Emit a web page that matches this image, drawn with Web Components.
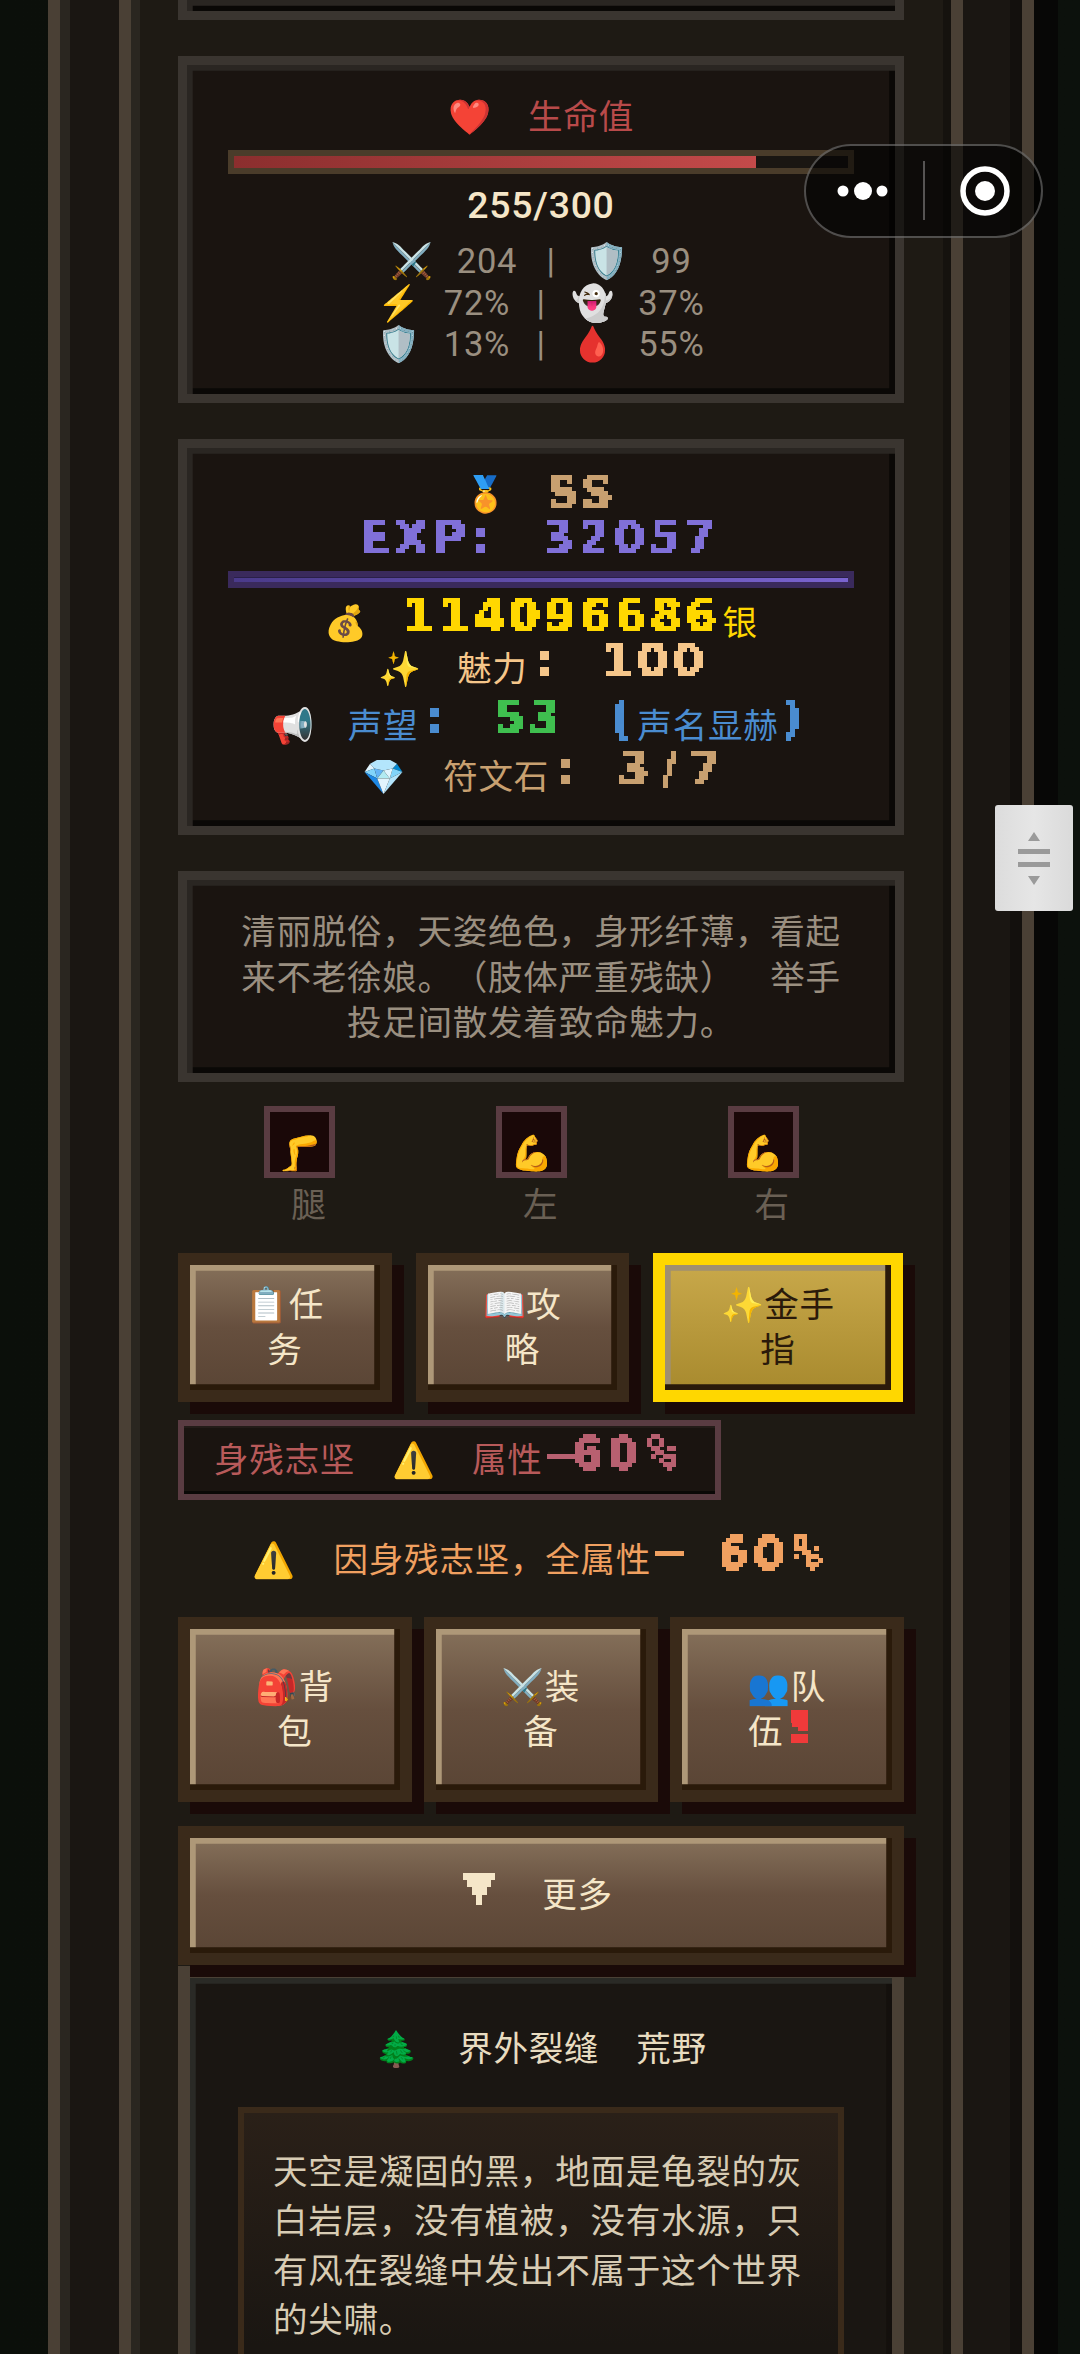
<!DOCTYPE html>
<html lang="zh-CN"><head><meta charset="utf-8"><title>status</title>
<style>
html,body{margin:0;padding:0;background:#0b0f0a}
body{font:34.56px/1.3 Roboto,"Noto Sans CJK SC","Noto Sans",sans-serif;color:#f5e6c8;letter-spacing:.72px;text-spacing-trim:space-all}
.e{font-family:"Noto Color Emoji","Noto Sans CJK SC",sans-serif;letter-spacing:0;line-height:0}
.e.tall{line-height:38px}
.r{display:flex;align-items:center;justify-content:center;white-space:nowrap;height:46px}
.t{text-align:center;white-space:nowrap}
.stats{color:#9a8f80;line-height:41.5px;word-spacing:14px;margin-top:14px}
.stats i{font-style:normal;margin:0 3px}
.stats i.w{margin:0 6px}
.gap36{height:36px}
.desc{color:#9a8f80;line-height:45.6px;text-align:center;white-space:nowrap;padding-top:30px}
.m{font:bold 48px/34px "DejaVu Sans Mono",monospace;letter-spacing:0;margin-left:4px}
.slots{display:grid;grid-template-columns:repeat(3,231.7px);padding-left:6px;margin-top:24px}
.btns3{display:grid;grid-template-columns:214px 213px 250px;gap:24px;margin-top:24px;position:relative}
.btns2{display:grid;grid-template-columns:repeat(3,234px);gap:12px}
.warn{height:60px;margin:30px 0 27px;color:#f0a060;padding-right:6px}
.more{margin-top:24px;position:relative;z-index:2;padding-right:6px}
</style>
</head><body>
<template id="px-tpl"><style>
:host{display:inline-block;font:bold 44px/34px "DejaVu Sans",sans-serif;letter-spacing:4.7px;word-spacing:0;margin-right:-4.7px}
span{display:block;filter:url(#px);padding:9px 2px 1px 0;white-space:pre}
svg{position:absolute;width:0;height:0}
</style><svg aria-hidden="true"><filter id="px" x="0" y="0" width="100%" height="100%" color-interpolation-filters="sRGB"><feComponentTransfer in="SourceGraphic" result="s"><feFuncA type="discrete" tableValues="0 1"/></feComponentTransfer><feFlood x="2" y="2" width="1" height="1"/><feComposite width="4" height="4"/><feTile result="a"/><feComposite in="s" in2="a" operator="in"/><feMorphology operator="dilate" radius="2"/></filter></svg><span><slot></slot></span></template>

<game-page>
  <stone-card stub></stone-card>
  <div class="gap36"></div>
  <stone-card style="height:347px">
    <div class="r" style="height:46px;margin-top:29px;color:#b84a4a"><span class="e" style="margin-right:37px">❤️</span>生命值</div>
    <stat-bar kind="hp" value="85"></stat-bar>
    <div class="t" style="font-size:37.44px;font-weight:500;line-height:44px;margin-top:9px">255/300</div>
    <div class="t stats"><span class="e">⚔️</span> 204 <i class="w">|</i> <span class="e">🛡️</span> 99<br><span class="e">⚡</span> 72% <i>|</i> <span class="e">👻</span> 37%<br><span class="e">🛡️</span> 13% <i>|</i> <span class="e">🩸</span> 55%</div>
  </stone-card>
  <div class="gap36"></div>
  <stone-card style="height:396px">
    <div class="r" style="margin-top:23px;padding-right:3px"><span class="e" style="margin-right:40px">🏅</span><px-t style="color:#c8a070;margin-bottom:10px">SS</px-t></div>
    <div class="r" style="height:34px;color:#8070d8;padding-right:5px"><px-t>EXP:</px-t><px-t style="margin-left:53px">32057</px-t></div>
    <stat-bar kind="exp" value="100"></stat-bar>
    <div class="r" style="margin-top:12px;color:#ffd700"><span class="e" style="margin-right:36px">💰</span><px-t style="margin-bottom:22px">114096686</px-t><span style="margin-left:4px">银</span></div>
    <div class="r" style="padding-left:6px;color:#f5c68a"><span class="e" style="margin-right:36px">✨</span>魅力<px-t style="margin-bottom:24px;margin-left:8px">:</px-t><px-t style="margin:0 0 24px 47px">100</px-t></div>
    <div class="r" style="padding-right:1px;margin-top:11px;color:#4a8cd0"><span class="e" style="margin-right:33px">📢</span>声望<px-t style="margin-bottom:24px;margin-left:8px">:</px-t><px-t style="margin:0 0 24px 48px;color:#3fbf4f">53</px-t><px-t style="margin:0 0 24px 44px">(</px-t>声名显赫<px-t style="margin:0 0 24px 4px">)</px-t></div>
    <div class="r" style="padding-left:2px;margin-top:5px;color:#c8a070"><span class="e" style="margin-right:38px">💎</span>符文石<px-t style="margin-bottom:24px;margin-left:8px">:</px-t><px-t style="margin:0 -12px 24px 42px;letter-spacing:12px">3/7</px-t></div>
  </stone-card>
  <div class="gap36"></div>
  <stone-card style="height:211px">
    <div class="desc">清丽脱俗&#xFF0C;天姿绝色&#xFF0C;身形纤薄&#xFF0C;看起<br>来不老徐娘。&#xFF08;肢体严重残缺&#xFF09;&#x3000;举手<br>投足间散发着致命魅力。</div>
  </stone-card>
  <div class="slots">
    <body-slot label="腿"><span class="e tall">🦵</span></body-slot>
    <body-slot label="左"><span class="e tall">💪</span></body-slot>
    <body-slot label="右"><span class="e tall">💪</span></body-slot>
  </div>
  <div class="btns3">
    <wood-button h="149"><span class="e">📋</span>任<br>务</wood-button>
    <wood-button h="149"><span class="e">📖</span>攻<br>略</wood-button>
    <wood-button h="149" gold><span class="e">✨</span>金手<br>指</wood-button>
  </div>
  <debuff-tag><span>身残志坚</span><span class="e" style="margin:0 37px 0 37px">⚠️</span><span>属性</span><px-t style="margin-bottom:22px;color:#b86070"><span style="letter-spacing:-7px">−</span>60<span class="m">%</span></px-t></debuff-tag>
  <div class="r warn"><span class="e" style="margin-right:38px">⚠️</span>因身残志坚&#xFF0C;全属性<px-t style="margin-bottom:22px">−</px-t><px-t style="margin:0 0 22px 28px">60<span class="m">%</span></px-t></div>
  <div class="btns2">
    <wood-button h="185"><span class="e">🎒</span>背<br>包</wood-button>
    <wood-button h="185"><span class="e">⚔️</span>装<br>备</wood-button>
    <wood-button h="185"><span class="e">👥</span>队<br>伍<px-t style="color:#f03a3a;vertical-align:1px;margin:-30px 4px -10px 12px;transform:scaleX(1.8)">!</px-t></wood-button>
  </div>
  <wood-button h="139" class="more"><svg width="32" height="32" viewBox="0 0 32 32" style="vertical-align:2px;margin-right:47px" fill="#f5e6c8"><path d="M0 0h32v7h-4v7h-4v8h-5v10h-6V22H9v-8H4V7H0z"/></svg>更多</wood-button>
  <region-panel>
    <div class="r" style="color:#e8dcc0;height:46px;margin-top:48px"><span class="e" style="margin-right:40px">🌲</span>界外裂缝<span style="margin-left:37px">荒野</span></div>
    <lore-box>天空是凝固的黑&#xFF0C;地面是龟裂的灰<br>白岩层&#xFF0C;没有植被&#xFF0C;没有水源&#xFF0C;只<br>有风在裂缝中发出不属于这个世界<br>的尖啸。</lore-box>
  </region-panel>
  <wx-capsule></wx-capsule>
  <scroll-handle></scroll-handle>
</game-page>

<script>
const def=(n,html,init)=>customElements.define(n,class extends HTMLElement{
  constructor(){super();const s=this.attachShadow({mode:'open'});s.innerHTML=html;}
  connectedCallback(){init&&init.call(this,this.shadowRoot);}
});
customElements.define('px-t',class extends HTMLElement{constructor(){super();this.attachShadow({mode:'open'}).appendChild(document.getElementById('px-tpl').content.cloneNode(true));}});
def('game-page',`<style>
:host{display:block;position:relative;width:1080px;height:2354px;overflow:hidden;box-sizing:border-box;padding-left:48px;background:linear-gradient(90deg,#0b0f0a,#0c110c)}
.outer{box-sizing:border-box;width:986px;height:2354px;border:solid #4a4035;border-width:0 12px;background:#1a1612;padding-left:59px;box-shadow:inset 10px 0 0 #2a2620,inset -12px 0 0 #13100d,24px 0 0 #070706}
.inner{box-sizing:border-box;width:844px;height:2354px;border:solid #4a4035;border-width:0 12px;background:#1e1a14;padding-left:47px;box-shadow:inset 9px 0 0 #2a2620,inset -8px 0 0 #15120e}
.col{width:726px}
</style><div class="outer"><div class="inner"><div class="col"><slot></slot></div></div></div>`);
def('stone-card',`<style>
:host{display:block;box-sizing:border-box;border:9px solid #3a3530;background:#1a1410;box-shadow:inset 5.76px 5.76px 0 #2a2622,inset -5.76px -5.76px 0 #0a0806;text-align:center}
:host([stub]){height:20px;border-top:0}
</style><slot></slot>`);
def('stat-bar',`<style>
:host{display:block;box-sizing:border-box;height:24px;margin:10px 41px 0;border:6px solid #4a3c2a;background:#1a1612;position:relative}
:host([kind=exp]){height:17px;margin-top:20px;border-color:#3a2a5c;background:#2a2048}
i{display:block;height:100%;background:linear-gradient(90deg,#8b2e2e,#c44a4a)}
:host([kind=exp]) i{height:4px;margin-top:.5px;background:linear-gradient(90deg,#4a3a8a,#7a64d0)}
</style><i></i>`,function(s){s.querySelector('i').style.width=this.getAttribute('value')+'%'});
def('body-slot',`<style>
:host{display:flex;flex-direction:column;align-items:center;color:#6a6054;height:123px}
.b{box-sizing:border-box;width:71px;height:72px;border:6px solid #5a3c42;background:#1a0808;display:flex;align-items:flex-end;justify-content:center;line-height:44px}
.l{line-height:40px;margin:7px 0 0 18px}
</style><div class="b"><slot></slot></div><div class="l"></div>`,function(s){s.querySelector('.l').textContent=this.getAttribute('label')});
def('wood-button',`<style>
:host{display:flex;box-sizing:border-box;border:12px solid #3a2a1a;align-items:center;justify-content:center;text-align:center;line-height:44.5px;color:#f5e6c8;white-space:nowrap;background:linear-gradient(180deg,#85705a,#664f3e 50%,#5a4535);box-shadow:inset -5.76px -5.76px 0 #2a1a0a,inset 5.76px 5.76px 0 #ae9878,12px 12px 0 #1a0a08}
:host([gold]){border-color:#ffd700;background:linear-gradient(180deg,#c8a84a,#a88a2e);color:#2a1a0a;box-shadow:inset -5.76px -5.76px 0 #2a1a0a,inset 5.76px 5.76px 0 #a09070,12px 12px 0 #1a0a08}
</style><div><slot></slot></div>`,function(){this.style.height=this.getAttribute('h')+'px'});
def('debuff-tag',`<style>
:host{display:flex;align-items:center;box-sizing:border-box;width:543px;height:80px;border:6px solid #5a3c42;background:#1a1410;padding-left:30px;color:#b85a5a;white-space:nowrap;box-shadow:inset 0 2px 0 #241c18,inset 0 -3px 0 #0a0806;margin-top:18px}
</style><slot></slot>`);
def('region-panel',`<style>
:host{display:block;box-sizing:border-box;height:600px;margin-top:1px;border:12px solid #4a4035;background:#1a1612;box-shadow:inset 5.76px 5.76px 0 #2a2a26,inset -5.76px -5.76px 0 #14100d;text-align:center}
</style><slot></slot>`);
def('lore-box',`<style>
:host{display:block;box-sizing:border-box;margin:35px 48px 0;height:400px;border:6px solid #3a2a1a;background:linear-gradient(180deg,#2a2018,#1a1612 60%);padding:35px 0 0 29px;text-align:left;color:#d8ccb4;line-height:49.4px;white-space:nowrap}
</style><slot></slot>`);
def('wx-capsule',`<style>
:host{position:absolute;left:804px;top:144px;width:239px;height:94px;box-sizing:border-box;border:2.5px solid rgba(255,255,255,.28);border-radius:47px;background:rgba(0,0,0,.55)}
svg{position:absolute;left:-2.5px;top:-2.5px}
</style><svg width="239" height="94" viewBox="0 0 239 94"><g fill="#fff"><circle cx="39" cy="47" r="5.5"/><circle cx="59" cy="47" r="9"/><circle cx="78" cy="47" r="5.5"/><circle cx="181" cy="47" r="10"/></g><circle cx="181" cy="47" r="22" fill="none" stroke="#fff" stroke-width="5.5"/><rect x="119" y="17" width="2" height="59" fill="#fff" opacity=".3"/></svg>`);
def('scroll-handle',`<style>
:host{position:absolute;left:995px;top:805px;width:78px;height:106px;border-radius:3px;background:linear-gradient(90deg,#dcdcdc,#e6e6e6 50%,#dadada)}
svg{display:block}
</style><svg width="78" height="106" viewBox="0 0 78 106" fill="#9a9a9a"><path d="M39 27l6 9H33zM23 44h32v5H23zM23 57h32v5H23zM33 71h12l-6 9z"/></svg>`);
</script>
</body></html>
